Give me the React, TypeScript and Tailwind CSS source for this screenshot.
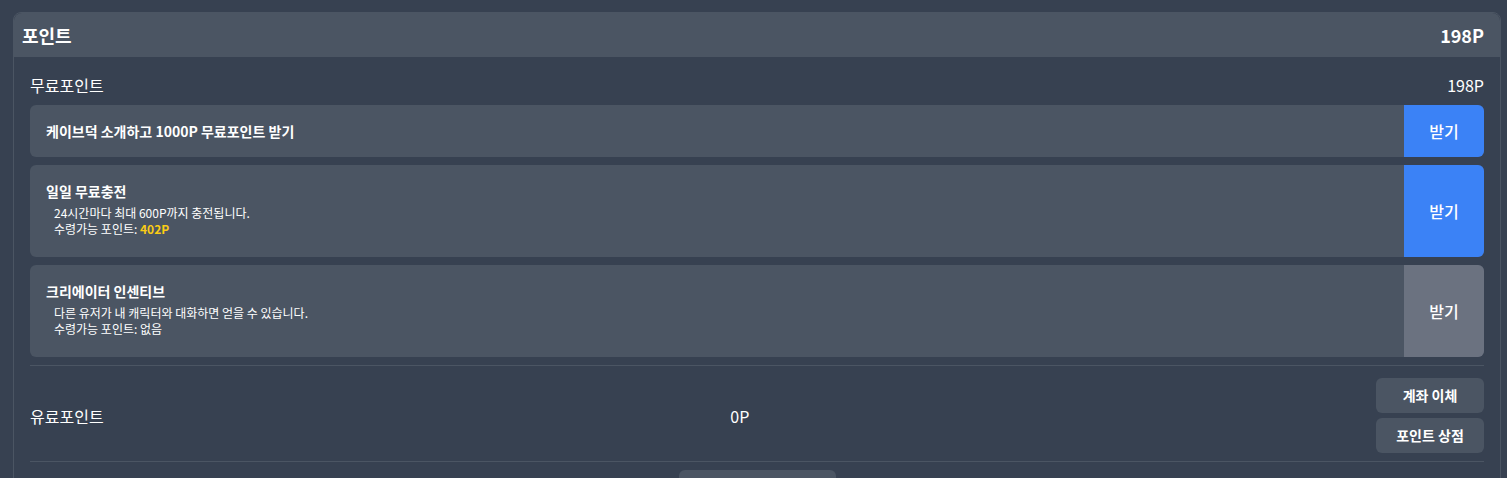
import React from "react";

const font = "font-['Noto_Sans_CJK_KR','Noto_Sans',sans-serif]";

function Item({ title, lines, active }: { title: string; lines?: React.ReactNode[]; active: boolean }) {
  return (
    <div className="flex rounded-md bg-[#4b5563] overflow-hidden">
      <div className={`flex-1 px-4 ${lines ? "pt-4 pb-5" : "py-4"}`}>
        <div className="text-[14px] leading-5 font-bold text-white">{title}</div>
        {lines && (
          <div className="mt-1 ml-2 text-[12px] leading-4 text-white">
            {lines.map((l, i) => (
              <div key={i}>{l}</div>
            ))}
          </div>
        )}
      </div>
      <button
        className={`w-20 flex items-center justify-center text-[16px] font-medium text-white ${
          active ? "bg-[#3b82f6]" : "bg-[#6b7280]"
        }`}
      >
        받기
      </button>
    </div>
  );
}

export default function App() {
  return (
    <div className={`min-h-screen bg-[#374151] pt-3 pl-[13px] pr-[6px] ${font} text-white`}>
      <div className="rounded-t-lg border border-[#4b5563]">
        <div className="flex items-center justify-between bg-[#4b5563] pl-2 pr-4 py-2 rounded-t-lg">
          <div className="text-[18px] leading-7 font-bold">포인트</div>
          <div className="text-[18px] leading-7 font-bold">198P</div>
        </div>
        <div className="px-4">
          <div className="flex items-center justify-between pt-4 mb-2">
            <div className="text-[16px] leading-6">무료포인트</div>
            <div className="text-[16px] leading-6">198P</div>
          </div>
          <div className="flex flex-col gap-2">
            <Item title="케이브덕 소개하고 1000P 무료포인트 받기" active />
            <Item
              title="일일 무료충전"
              active
              lines={[
                "24시간마다 최대 600P까지 충전됩니다.",
                <>
                  수령가능 포인트: <span className="font-bold text-[#facc15]">402P</span>
                </>,
              ]}
            />
            <Item
              title="크리에이터 인센티브"
              active={false}
              lines={["다른 유저가 내 캐릭터와 대화하면 얻을 수 있습니다.", "수령가능 포인트: 없음"]}
            />
          </div>
          <div className="mt-2 border-t border-[#4b5563] pt-3 pb-2 flex items-center justify-between">
            <div className="text-[16px] leading-6">유료포인트</div>
            <div className="text-[16px] leading-6">0P</div>
            <div className="flex flex-col gap-[5px] w-[108px]">
              <button className="h-[35px] rounded-md bg-[#4b5563] text-[14px] font-bold text-white">계좌 이체</button>
              <button className="h-[35px] rounded-md bg-[#4b5563] text-[14px] font-bold text-white">포인트 상점</button>
            </div>
          </div>
          <div className="border-t border-[#4b5563] pt-2 pb-4 flex justify-center">
            <button aria-label="더보기" className="w-[157px] h-[40px] rounded-md bg-[#4b5563]"></button>
          </div>
        </div>
      </div>
    </div>
  );
}
